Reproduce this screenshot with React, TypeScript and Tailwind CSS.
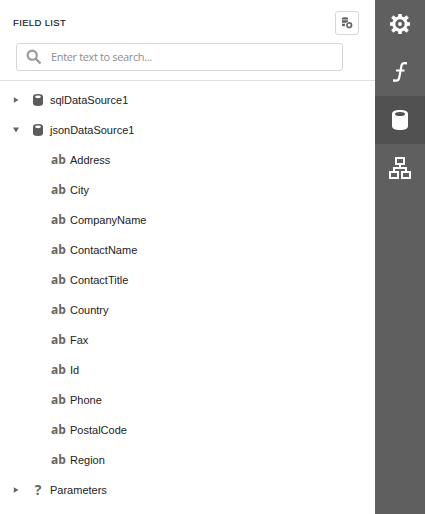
import React from 'react';

const fields = ['Address', 'City', 'CompanyName', 'ContactName', 'ContactTitle', 'Country', 'Fax', 'Id', 'Phone', 'PostalCode', 'Region'];

function Arrow({ open = false }: { open?: boolean }) {
  return (
    <svg className="w-[6px] h-[6px] shrink-0" viewBox="0 0 6 6" fill="#666666">
      {open ? <path d="M0 .5h6L3 5.5z" /> : <path d="M.8 .2v5.6L5.5 3z" />}
    </svg>
  );
}

function Database() {
  return (
    <svg className="w-[10px] h-3 shrink-0" viewBox="0 0 10 12">
      <path d="M0 2.5C0 .8 2 0 5 0s5 .8 5 2.5v7c0 1.7-2 2.5-5 2.5s-5-.8-5-2.5z" fill="#5c5c5c" />
      <ellipse cx="5" cy="2.8" rx="2.9" ry="1.4" fill="#fff" />
    </svg>
  );
}

function Root({ label, open, param }: { label: string; open?: boolean; param?: boolean }) {
  return (
    <div className="flex h-[30px] items-center pl-[13px]">
      <Arrow open={open} />
      <span className="ml-[14px] mr-[7px] flex w-[10px] justify-center">
        {param ? <b className="font-['Open_Sans',sans-serif] text-[14px] leading-none text-[#666666]">?</b> : <Database />}
      </span>
      <span>{label}</span>
    </div>
  );
}

function Leaf({ label }: { label: string }) {
  return (
    <div className="flex h-[30px] items-center pl-[51px]">
      <b className="w-[19px] font-['Open_Sans',sans-serif] text-[12px] leading-none text-[#666666]">ab</b>
      <span>{label}</span>
    </div>
  );
}

export default function App() {
  return (
    <div className="flex h-[514px] w-[426px] overflow-hidden bg-white font-['Liberation_Sans',Arial,sans-serif] text-[11px] text-[#222222]">
      <main className="w-[375px]">
        <header className="h-[81px] border-b border-[#e0e0e0]">
          <div className="flex h-[43px] items-start justify-between pl-[13px] pr-4 pt-[11px]">
            <h1 className="pt-[4px] text-[9.5px] leading-4 font-normal tracking-[0.35px] text-[#14142b] [-webkit-text-stroke:0.15px]">FIELD LIST</h1>
            <button className="flex h-6 w-6 items-center justify-center rounded-[3px] border border-[#d8d8d8]">
              <svg width="12" height="12" viewBox="0 0 12 12" fill="#5c5c5c">
                <path d="M1 1Q1 .3 4 .3t3 .7v1.4H1zM1 3.3h6v1.2L5 5.7H1zM1 6.8h3L3.7 9.5Q1 9.2 1 8.5z" />
                <circle cx="8.2" cy="8.2" r="2.3" fill="none" stroke="#666666" strokeWidth="1.7" />
              </svg>
            </button>
          </div>
          <div className="ml-4 flex h-7 w-[327px] items-center rounded-[3px] border border-[#d8d8d8] pl-[9px]">
            <svg width="16" height="16" viewBox="0 0 16 16" fill="none" stroke="#999999">
              <circle cx="6.2" cy="6.2" r="4.6" strokeWidth="2.1" />
              <path d="m9.5 9.5 5 5" strokeWidth="2.4" />
            </svg>
            <span className="ml-[9px] -mt-px font-['Open_Sans',sans-serif] text-[11px] leading-4 tracking-[-0.36px] text-[#8e8e8e]">Enter text to search...</span>
          </div>
        </header>
        <div className="pt-1">
          <Root label="sqlDataSource1" />
          <Root label="jsonDataSource1" open />
          {fields.map((f) => <Leaf key={f} label={f} />)}
          <Root label="Parameters" param />
        </div>
      </main>
      <nav className="h-full w-[50px] bg-[#5f5f5f]">
        <div className="flex h-12 items-center justify-center">
          <svg width="20" height="20" viewBox="0 0 20 20" fill="none">
            <g stroke="#fff" strokeWidth="3.6">
              <path d="M10 0v4M10 16v4M0 10h4M16 10h4M2.4 2.4l3 3M14.6 14.6l3 3M2.4 17.6l3-3M14.6 5.4l3-3" />
              <circle cx="10" cy="10" r="6.2" strokeWidth="3" />
            </g>
            <circle cx="10" cy="10" r="1.9" fill="#fff" />
          </svg>
        </div>
        <div className="flex h-12 items-center justify-center">
          <svg width="14" height="20" viewBox="0 0 14 20" fill="none" stroke="#fff" strokeWidth="2.2">
            <path d="M13.5 2.5V1.2H11.3C9.5 1.2 8.8 2 8.4 4L6.2 15.7C5.8 17.8 5 18.6 3.3 18.6H.7V17.3M3 8.5h8.5" />
          </svg>
        </div>
        <div className="flex h-12 items-center justify-center bg-[#515151]">
          <svg width="16" height="20" viewBox="0 0 16 20">
            <path d="M0 4c0-2.7 3-4 8-4s8 1.3 8 4v12c0 2.7-3 4-8 4s-8-1.3-8-4z" fill="#fff" />
            <ellipse cx="8" cy="4" rx="5" ry="2" fill="#515151" />
          </svg>
        </div>
        <div className="flex h-12 items-center justify-center">
          <svg width="22" height="22" viewBox="0 0 22 22" fill="none" stroke="#fff" strokeWidth="2">
            <path d="M7 1h8v6H7zM1 15h8v6H1zM13 15h8v6h-8zM11 7v4M5 15v-4h12v4" />
          </svg>
        </div>
      </nav>
    </div>
  );
}
